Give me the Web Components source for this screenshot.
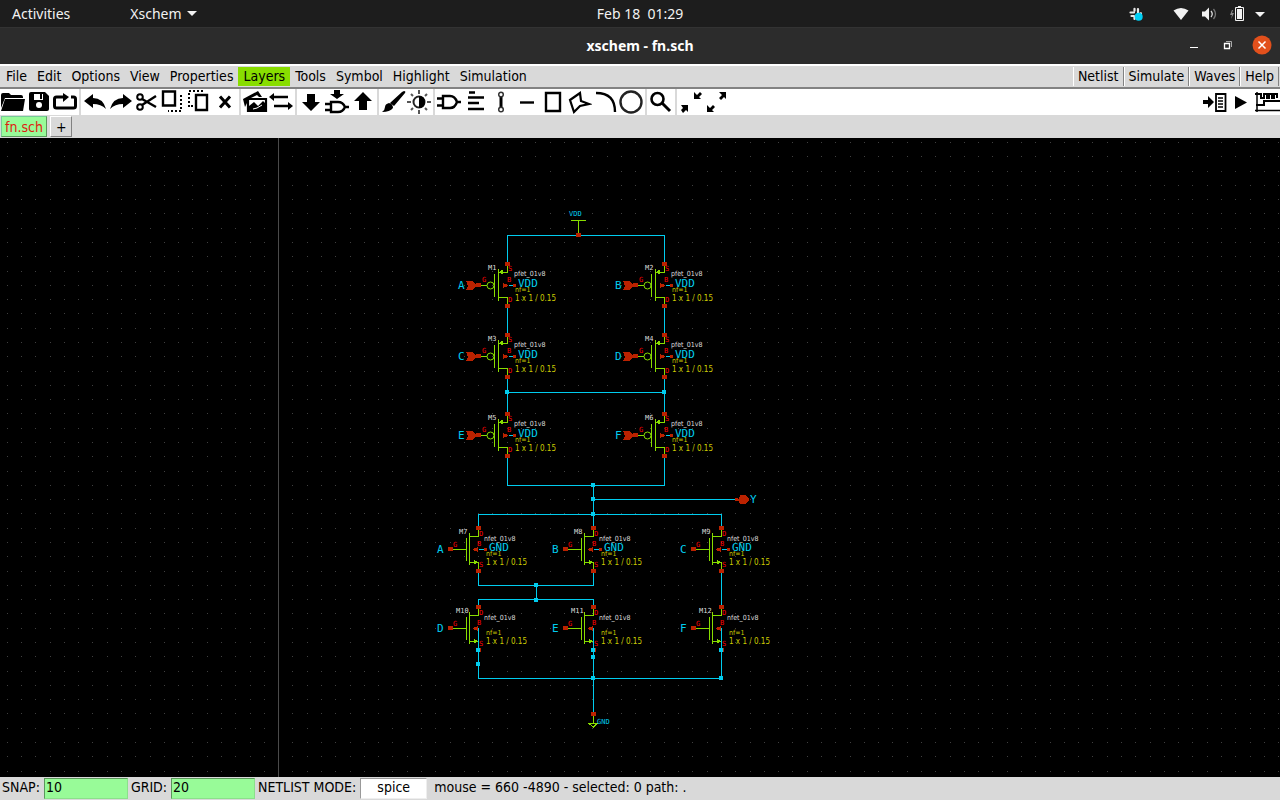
<!DOCTYPE html>
<html lang="en">
<head>
<meta charset="utf-8">
<title>xschem - fn.sch</title>
<style>
html, body { margin: 0; background: #000; }
</style>
</head>
<body>
<xs-desktop></xs-desktop>
<script>
const define = (name, html, setup) => {
  const t = document.createElement('template');
  t.innerHTML = html;
  customElements.define(name, class extends HTMLElement {
    connectedCallback() {
      if (this.shadowRoot) return;
      this.attachShadow({ mode: 'open' }).append(t.content.cloneNode(true));
      if (setup) setup(this, this.shadowRoot);
    }
  });
};

/* GNOME top panel */
define('xs-panel', `
<style>
:host { display: grid; grid-template-columns: 1fr auto 1fr; align-items: center; height: 27px; background: #1d1d1d; color: #f2f2f2; font: 14px/20px "Noto Sans", sans-serif; border-bottom: 1px solid #333; }
nav { display: flex; gap: 60px; padding-left: 12px; }
button { all: unset; display: flex; align-items: center; gap: 5px; }
.tray { display: flex; justify-content: flex-end; align-items: center; padding-right: 14px; }
time { white-space: pre; }
svg { display: block; }
</style>
<nav><button>Activities</button><button>Xschem <svg width="10" height="6"><path d="M0 0h10L5 5z" fill="#f2f2f2"/></svg></button></nav>
<time>Feb 18  01:29</time>
<div class="tray">
<svg width="140" height="20" viewBox="1126 3 140 20" aria-label="Status icons">
<g stroke="#e8e8e8" stroke-width="2.2" stroke-linecap="round"><path d="M1130.5 11.500h3.500M1134.500 7.800v2M1138 8v3.500M1141 12.300h-.5M1131.500 15h2.500M1134.500 15.500v2.500"/></g>
<circle cx="1138.700" cy="15.700" r="4" fill="#00cff5"/>
<path d="M1173.500 9.500q7.500-5 15 0L1181 19z" fill="#f2f2f2"/>
<path d="M1202 10.500h3l4-4v13l-4-4h-3z" fill="#f2f2f2"/>
<path d="M1211 10q2.500 3 0 6" fill="none" stroke="#ddd" stroke-width="1.300"/><path d="M1213.500 8q4 5 0 10" fill="none" stroke="#777" stroke-width="1.300"/>
<path d="M1232 9l-2 5h2l-1 4 3-6h-2l1-3z" fill="#888"/>
<path d="M1236 7.500h7v11h-7z" fill="#f2f2f2" /><path d="M1235.500 6.500h8v13h-8zM1238 5.500h3" fill="none" stroke="#f2f2f2"/><path d="M1236.500 7.500h6v11h-6z" fill="none" stroke="#1d1d1d"/>
<path d="M1255 11h10l-5 5z" fill="#f2f2f2"/>
</svg></div>`);

define('xs-titlebar', `
<style>
:host { display: grid; grid-template-columns: 1fr auto 1fr; align-items: center; height: 36px; background: #2c2c2c; color: #fff; font: bold 14px/20px "Noto Sans", sans-serif; }
h1 { font: inherit; margin: 0; grid-column: 2; }
.win { grid-column: 3; display: flex; justify-content: flex-end; gap: 12px; padding-right: 8px; }
button { all: unset; display: block; height: 22px; width: 22px; }
svg { display: block; }
</style>
<h1>xschem - fn.sch</h1>
<div class="win">
<button aria-label="Minimize"><svg width="22" height="22"><path d="M8 12.500h8" stroke="#fff"/></svg></button>
<button aria-label="Restore"><svg width="22" height="22"><path d="M8.500 8.500h5v5h-5z" fill="none" stroke="#fff" stroke-width="1.300"/><path d="M10 6.500h5.500V12" fill="none" stroke="#aaa"/></svg></button>
<button aria-label="Close"><svg width="22" height="22"><circle cx="12" cy="10" r="9.500" fill="#e2501c"/><path d="M8.500 6.500l7 7m0-7l-7 7" stroke="#fff" stroke-width="1.500"/></svg></button>
</div>`);

define('xs-menu', `
<style>
:host { display: block; }
button { all: unset; box-sizing: border-box; display: block; height: 19px; line-height: 17px; padding: 0 5px; white-space: nowrap; }
:host([hot]) button { background: #88dd00; }
:host([raised]) button { border-left: 1px solid #fff; border-right: 1px solid #828282; padding: 0 4px; }
</style>
<button><slot></slot></button>`);

define('xs-menubar', `
<style>
:host { display: flex; align-items: center; height: 21px; padding: 0 1px; background: #d9d9d9; border-top: 2px solid #fff; border-bottom: 2px solid #828282; color: #000; font: 14px/17px "DejaVu Sans Condensed", "DejaVu Sans", sans-serif; }
.grow { flex: 1; }
</style>
<xs-menu>File</xs-menu><xs-menu>Edit</xs-menu><xs-menu>Options</xs-menu><xs-menu>View</xs-menu><xs-menu>Properties</xs-menu><xs-menu hot>Layers</xs-menu><xs-menu>Tools</xs-menu><xs-menu>Symbol</xs-menu><xs-menu>Highlight</xs-menu><xs-menu>Simulation</xs-menu>
<span class="grow"></span>
<xs-menu raised>Netlist</xs-menu><xs-menu raised>Simulate</xs-menu><xs-menu raised>Waves</xs-menu><xs-menu raised>Help</xs-menu>`);

const L = (d, w = 2) => `<path d="${d}" fill="none" stroke="#000" stroke-width="${w}"/>`;
const F = d => `<path d="${d}"/>`;
const icons = {
  open: F('M1 6q0-2 2-2h6l2 2h10q2 0 2 2v1H5L1 19z') + F('M5 10h20l-2 12H1z'),
  save: F('M3 5q0-2 2-2h14l4 4v13q0 2-2 2H5q-2 0-2-2z') + '<path d="M8 5h9v6H8z" fill="#fff"/><path d="M14 5h2v5h-2z"/><circle cx="13" cy="16" r="3" fill="#fff"/>',
  reload: L('M12 8H4.500q-2 0-2 2v7q0 2 2 2h17q2 0 2-2v-7q0-2-2-2H19', 3) + F('M11 4l6 4-6 5z'),
  undo: F('M2 12l9-7v4q10 0 13 11-5-5-13-5v4z'),
  redo: F('M24 12l-9-7v4Q5 9 2 20q5-5 13-5v4z'),
  cut: '<circle cx="6" cy="8" r="2.800" fill="none" stroke="#000" stroke-width="2"/><circle cx="6" cy="18" r="2.800" fill="none" stroke="#000" stroke-width="2"/>' + L('M8 10l14 8M8 16l14-9', 2.4),
  copy: L('M3 2.500h12v14H3z', 2.4) + '<path d="M21 6v16H8" fill="none" stroke="#000" stroke-width="2" stroke-dasharray="2 2"/>',
  paste: L('M10 6h11v15H10z', 2.4) + '<path d="M3 18V2h14" fill="none" stroke="#000" stroke-width="2" stroke-dasharray="2 2"/>' + '<path d="M5 17h4" stroke="#000" stroke-width="2" stroke-dasharray="2 2"/>',
  del: L('M8 7.500l10 11M18 7.500l-10 11', 3),
  photo: F('M1 10L16 2l4 6h-3l-2-2-8 4-4 8z') + L('M6 10h18v12H6z', 2.2) + F('M7 21v-4l5-4 4 4 5-5 2 2v8z') + '<path d="M11 20l4-1 5-3" stroke="#fff" fill="none"/>',
  swap: L('M4 8h16M6 17h16', 2.4) + F('M1 8l5-4v8zM25 17l-5-4v8z'),
  down: F('M9 5h8v8h5l-9 9-9-9h5z'),
  symdown: F('M10 1h6v4h4l-7 5-7-5h4z') + L('M7 13h7q5 0 7 5-2 5-7 5H7zM1 15h6M1 21h6M21 18h4', 2.4),
  up: F('M9 21h8v-9h5l-9-9-9 9h5z'),
  brush: F('M24 2q2 0 1 2L14 17l-4-3L22 3zM9 14q4 1 4 5-3 4-11 4 3-2 3-5t4-4z'),
  sun: '<g stroke="#555" stroke-width="2"><path d="M13 1v4M13 21v4M1 13h4M21 13h4M5 5l2 2M19 19l2 2M5 21l2-2M19 7l2-2"/></g><circle cx="13" cy="13" r="5.500" fill="#fff" stroke="#222" stroke-width="2"/>' + F('M13 7q6 0 6 6t-6 6z'),
  gate: L('M7 7h7q5 0 7 6-2 6-7 6H7zM1 9.500h6M1 16.500h6M21 13h4', 2.4),
  lines: L('M7 3.500h6M6 8.500h16M6 14h11M6 20h16', 2.4),
  wire: L('M13 7v12', 3) + '<g fill="#fff" stroke="#333" stroke-width="1.500"><circle cx="13" cy="5.500" r="2.300"/><circle cx="13" cy="20.500" r="2.300"/></g>',
  line: L('M6 13.500h14', 2.4),
  rect: L('M6 4h14v18H6z', 2.4),
  poly: L('M4 11l10-7 1 8 8 3-9 2-6 6z', 2.2),
  arc: L('M4 4q19 0 19 19', 2.4),
  circle: '<circle cx="13" cy="13" r="10.500" fill="none" stroke="#222" stroke-width="2.400"/>',
  zoom: '<circle cx="9.500" cy="10" r="6" fill="none" stroke="#000" stroke-width="2.600"/>' + L('M14 14l8 8', 3),
  shrink: F('M3 16h7v7l-2-2-3 3-2-3 2-2zM16 10h7l-2-2 3-3-2-2-3 3-3-3z'),
  grow: F('M3 23h7l-2-2 3-3-2-2-3 3-3-3zM15 3h7v7l-2-2-3 3-2-2 3-3z'),
  netlist: F('M1 11h5V7l6 6-6 6v-4H1z') + L('M14 5h9.500v17H14z', 1.8) + L('M16 9h5M16 12h5M16 15h5M16 18h5', 1.3),
  play: F('M7 7l12 6.500L7 20z'),
  wave: L('M3 3v20M1 21.500h25', 1.5) + L('M1 5h6v4h3V5h3v4h2V5h3v4h2V5h3v4M2 16h8v-4h16', 2)
};

define('xs-tool', `
<style>
:host { display: block; }
button { all: unset; display: block; width: 26px; height: 26px; }
svg { display: block; }
</style>
<button></button>`, (el, root) => {
  const n = el.getAttribute('icon'), b = root.querySelector('button');
  b.setAttribute('aria-label', n);
  b.innerHTML = `<svg width="26" height="26" viewBox="0 0 26 26">${icons[n]}</svg>`;
});

define('xs-toolbar', `
<style>
:host { display: flex; height: 26px; background: #fff; }
i { width: 2px; margin: 0 1px; background: #d9d9d9; }
.grow { flex: 1; }
</style>`, (el, root) => {
  const h = 'open save reload | undo redo cut copy paste del | photo swap | down symdown up | brush sun | gate lines wire line rect poly arc circle | zoom | shrink grow > netlist play wave'
    .split(' ').map(n => n === '|' ? '<i></i>' : n === '>' ? '<span class="grow"></span>' : `<xs-tool icon="${n}"></xs-tool>`).join('');
  root.querySelector('style').insertAdjacentHTML('afterend', h);
});

define('xs-tabs', `
<style>
:host { display: flex; align-items: center; gap: 3px; height: 23px; padding-left: 1px; background: #d9d9d9; font: 14px/18px "DejaVu Sans Condensed", "DejaVu Sans", sans-serif; }
button { all: unset; box-sizing: border-box; height: 21px; border: 1px solid #fff; border-right-color: #828282; border-bottom-color: #828282; padding: 0 5px; }
.on { background: #98fb98; color: #e02010; padding: 0 3px; line-height: 16px; border-color: #7c9; border-right-color: #5b975b; border-bottom-color: #5b975b; }
</style>
<button class="on">fn.sch</button><button aria-label="New tab">+</button>`);

define('xs-schematic', `
<style>
:host { display: block; flex: 1; min-height: 600px; background: #000; overflow: hidden; }
svg { display: block; width: 100%; height: 639px; }
text { font-family: "DejaVu Sans Mono", monospace; font-size: 7px; fill: #ddd; }
circle { shape-rendering: auto; }
.w { fill: none; stroke: #00ccee; }
.g { fill: none; stroke: #88dd00; }
.r { fill: #bb2200; }
.j { fill: #00ccee; }
.ga { fill: #88dd00; }
.m, .y, .v { font-family: "DejaVu Sans Condensed", "DejaVu Sans", sans-serif; }
.y, .v { fill: #cccc00; }
.v { font-size: 8px; }
.p { fill: #f00; }
.n { fill: #00ccee; font-size: 11px; }
.s { fill: #00ccee; }
</style>
<svg shape-rendering="crispEdges" aria-label="Schematic fn.sch"></svg>`, (el, root) => {
  const step = 100 / 7;
  let dots = '';
  for (let j = 0; j < 46; j++) for (let i = -20; i < 160; i++)
    dots += `M${Math.round(278.2 + i * step)} ${Math.round(4 + j * step)}h1v1h-1z`;
  const sq = (x, y, c = 'r') => `<path class="${c}" d="M${x - 2} ${y - 2}h5v4h-5z"/>`;
  const tx = (x, y, c, s) => `<text class="${c}" x="${x}" y="${y}">${s}</text>`;
  const pmos = (x, y, name, net) => `<g>
    <path class="g" d="M${x - 26} ${y + .5}h6M${x - 12.5} ${y - 11}v23M${x - 8.5} ${y - 16}v32M${x - 8} ${y - 12.5}h8.500v-7M${x - 8} ${y + 12.5}h8.500v8"/>
    <circle class="g" cx="${x - 16.5}" cy="${y + .5}" r="3.500"/>
    <path class="ga" d="M${x - 9} ${y - 12.5}l5-3v5z"/>
    <path class="w" d="M${x + 2} ${y + .5}h6"/>
    ${sq(x, y - 21)}${sq(x, y + 21)}${sq(x - 29, y)}
    <path class="r" d="M${x - 41} ${y - 4}h6l4 4h2v1h-2l-4 4h-6l2-4zM${x - 4} ${y - 2}l5 2v1l-5 2zM${x + 6} ${y - 1}h3v3h-3z"/>
    ${tx(x - 19, y - 15, '', name)}${tx(x + 7, y - 9, 'm', 'pfet_01v8')}${tx(x + 8, y + 7, 'y', 'nf=1')}${tx(x + 8, y + 16, 'v', '1 x 1 / 0.15')}
    ${tx(x + 11, y + 2, 'n', 'VDD')}${tx(x - 49, y + 4, 'n', net)}
    ${tx(x - 25, y - 3, 'p', 'G')}${tx(x, y - 3, 'p', 'B')}${tx(x + 1, y - 14, 'p', 'S')}${tx(x + 1, y + 17, 'p', 'D')}</g>`;
  const nmos = (x, y, name, net, body) => `<g>
    <path class="g" d="M${x - 26} ${y + .5}h14M${x - 11.5} ${y - 11}v23M${x - 8.500} ${y - 16}v32M${x - 8} ${y - 12.5}h8.500v-7M${x - 8} ${y + 13.5}h8.500v8"/>
    <path class="ga" d="M${x} ${y + 13.500}l-4-3v5z"/>
    <path class="w" d="M${x + 1} ${y + .5}${body ? 'h6' : 'h-.5v22'}"/>
    ${sq(x, y - 21)}${sq(x, y + 22)}${sq(x - 28, y)}
    <path class="r" d="M${x - 5} ${y}l5-2v5l-5-2z${body ? `M${x + 6} ${y - 1}h3v3h-3z` : ''}"/>
    ${tx(x - (name.length > 2 ? 22 : 19), y - 15, '', name)}${tx(x + 6, y - 8, 'm', 'nfet_01v8')}${tx(x + 8, y + 7, 'y', 'nf=1')}${tx(x + 8, y + 16, 'v', '1 x 1 / 0.15')}
    ${body ? tx(x + 11, y + 2, 'n', 'GND') : ''}${tx(x - 41, y + 4, 'n', net)}
    ${tx(x - 25, y - 2, 'p', 'G')}${tx(x - 1, y - 3, 'p', 'B')}${tx(x + 1, y - 13, 'p', 'D')}${tx(x + 1, y + 18, 'p', 'S')}</g>`;
  root.querySelector('svg').innerHTML = `
  <path d="${dots}" fill="#404040"/><path d="M278.500 0v2000" stroke="#4a4a4a"/>
  <g transform="translate(0 -138)">
  <path class="w" d="M507.500 264V235.500H664.500V264M507.500 306V335M664.500 306V335M507.500 378V414M664.500 378V414M507.500 392.500H664.500M507.500 457V485.500H664.500V457M593.500 485V528M593.500 499.500H736M478.500 528V514.500H721.500V528M478.500 571V585.500H593.500V571M536.500 585V600M478.500 607V599.500H593.500V607M721.500 571V607M478.500 650V678.500H721.500V650M593.500 650V714"/>
  <path class="g" d="M571 220.500h15M578.500 220v15M593.500 716v8M589 723.500h8l-3.500 3.500z"/>
  ${pmos(507, 285, 'M1', 'A')}${pmos(664, 285, 'M2', 'B')}${pmos(507, 356, 'M3', 'C')}${pmos(664, 356, 'M4', 'D')}${pmos(507, 435, 'M5', 'E')}${pmos(664, 435, 'M6', 'F')}
  ${nmos(478, 549, 'M7', 'A', 1)}${nmos(593, 549, 'M8', 'B', 1)}${nmos(721, 549, 'M9', 'C', 1)}
  ${nmos(478, 628, 'M10', 'D')}${nmos(593, 628, 'M11', 'E')}${nmos(721, 628, 'M12', 'F')}
  ${sq(578, 235)}${sq(593, 714)}
  <path class="r" d="M735 498h3v3h-3zM738 499h1l1-4h5l4 4v1l-4 4h-5l-1-3h-1z"/>
  ${[[507, 392], [664, 392], [593, 485], [593, 499], [593, 514], [536, 585], [536, 600], [478, 650], [478, 664], [593, 650], [593, 657], [593, 678], [721, 650], [721, 678]].map(p => `<path class="j" d="M${p[0] - 2} ${p[1] - 2}h4v4h-4z"/>`).join('')}
  ${tx(569, 216, 's', 'VDD')}${tx(597, 724, 's', 'GND')}${tx(750, 503, 'n', 'Y')}
  </g>`;
});

define('xs-status', `
<style>
:host { display: flex; align-items: center; height: 23px; background: #d9d9d9; color: #000; font: 14px/18px "DejaVu Sans Condensed", "DejaVu Sans", sans-serif; padding-left: 2px; }
label { display: flex; align-items: center; gap: 4px; margin-right: 3px; white-space: nowrap; }
label, output { height: 23px; line-height: 21px; }
input { box-sizing: border-box; width: 84px; height: 21px; margin: 0; padding: 0 1px 2px; border: 1px solid #5b975b; border-right-color: #8be08b; border-bottom-color: #8be08b; background: #98fb98; font: inherit; color: #000; border-radius: 0; }
.mode { width: 67px; background: #fff; text-align: center; border-color: #999 #eee #eee #999; }
output { margin-left: 4px; white-space: nowrap; }
span { height: 23px; }
</style>
<label><span>SNAP:</span><input value="10"></label><label><span>GRID:</span><input value="20"></label><label><span>NETLIST MODE:</span><input class="mode" value="spice"></label><output>mouse = 660 -4890 - selected: 0 path: .</output>`);

define('xs-desktop', `
<style>:host { display: flex; flex-direction: column; min-height: 100vh; }</style>
<xs-panel></xs-panel><xs-titlebar></xs-titlebar><xs-menubar></xs-menubar><xs-toolbar></xs-toolbar><xs-tabs></xs-tabs><xs-schematic></xs-schematic><xs-status></xs-status>`);
</script>
</body>
</html>
